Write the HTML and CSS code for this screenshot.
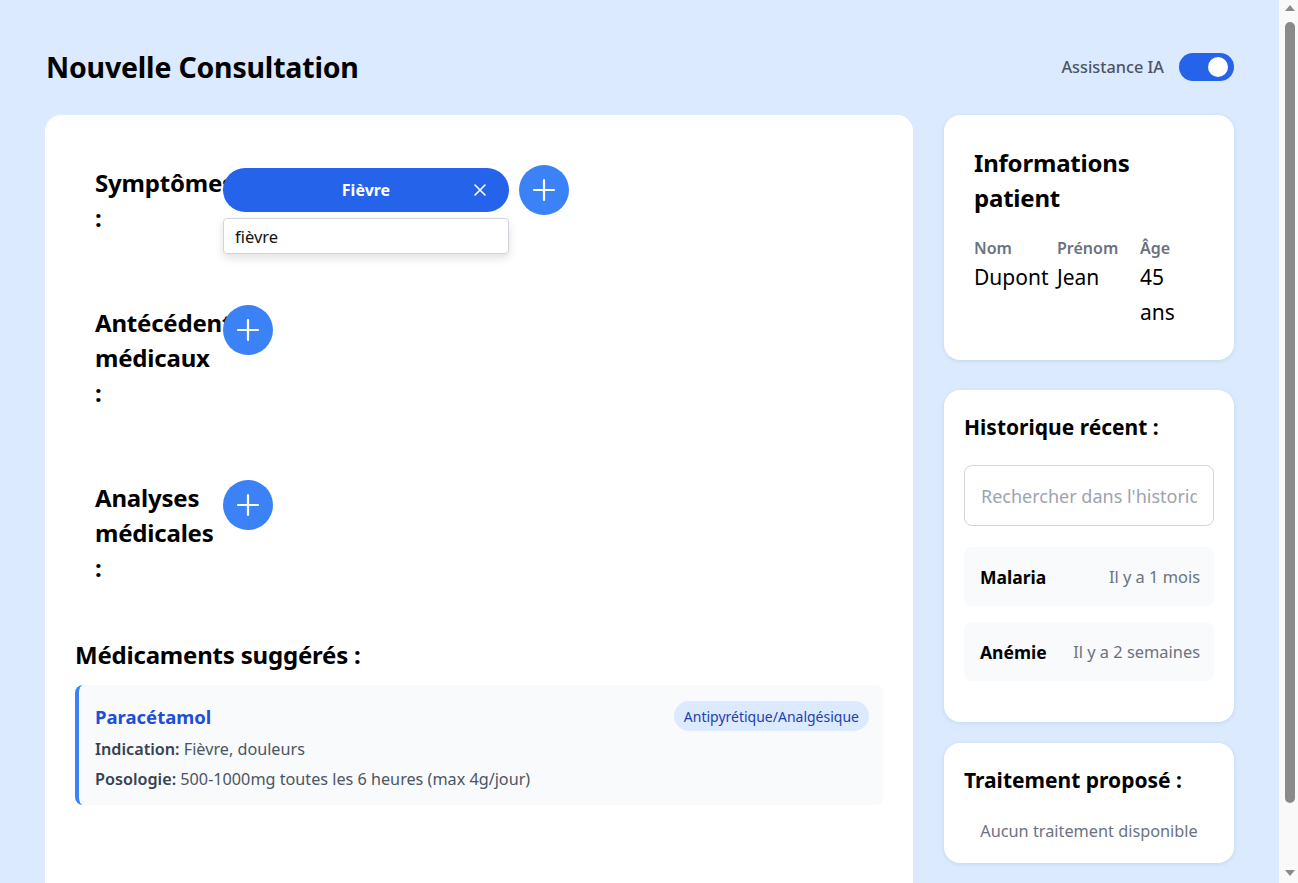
FILE: index.html
```html
<!DOCTYPE html>
<html lang="fr">
<head>
<meta charset="utf-8">
<title>Nouvelle Consultation</title>
<link rel="stylesheet" href="styles.css">
</head>
<body>
<div class="page">
  <header class="header">
    <h1 class="page-title">Nouvelle Consultation</h1>
    <div class="ai-toggle">
      <span class="ai-label">Assistance IA</span>
      <span class="switch"><span class="knob"></span></span>
    </div>
  </header>

  <div class="layout">
    <main class="main-card">
      <div class="sections">
        <div class="section">
          <h2 class="section-label">Symptômes :</h2>
          <div class="controls">
            <div class="chip-wrap">
              <div class="chip">
                <span></span>
                <span class="chip-text">Fièvre</span>
                <svg class="chip-x" width="14" height="14" viewBox="0 0 14 14"><path d="M2 2L12 12M12 2L2 12" stroke="#fff" stroke-width="1.6" stroke-linecap="round"/></svg>
              </div>
              <div class="dropdown">fièvre</div>
            </div>
            <button class="add-btn" type="button"><svg width="24" height="24" viewBox="0 0 24 24"><path d="M12 2V22M2 12H22" stroke="#fff" stroke-width="2.2" stroke-linecap="round"/></svg></button>
          </div>
        </div>

        <div class="section">
          <h2 class="section-label">Antécédents médicaux :</h2>
          <div class="controls">
            <button class="add-btn" type="button"><svg width="24" height="24" viewBox="0 0 24 24"><path d="M12 2V22M2 12H22" stroke="#fff" stroke-width="2.2" stroke-linecap="round"/></svg></button>
          </div>
        </div>

        <div class="section">
          <h2 class="section-label">Analyses médicales :</h2>
          <div class="controls">
            <button class="add-btn" type="button"><svg width="24" height="24" viewBox="0 0 24 24"><path d="M12 2V22M2 12H22" stroke="#fff" stroke-width="2.2" stroke-linecap="round"/></svg></button>
          </div>
        </div>
      </div>

      <h2 class="med-title">Médicaments suggérés :</h2>
      <div class="med-card">
        <div class="med-top">
          <span class="med-name">Paracétamol</span>
          <span class="med-badge">Antipyrétique/Analgésique</span>
        </div>
        <p class="med-line"><strong>Indication:</strong> Fièvre, douleurs</p>
        <p class="med-line"><strong>Posologie:</strong> 500-1000mg toutes les 6 heures (max 4g/jour)</p>
      </div>
    </main>

    <aside class="side">
      <section class="card info-card">
        <h2 class="info-title">Informations patient</h2>
        <div class="info-grid">
          <span class="info-key">Nom</span>
          <span class="info-key">Prénom</span>
          <span class="info-key">Âge</span>
          <span class="info-val">Dupont</span>
          <span class="info-val">Jean</span>
          <span class="info-val">45 ans</span>
        </div>
      </section>

      <section class="card hist-card">
        <h2 class="side-title">Historique récent :</h2>
        <input class="hist-search" type="text" placeholder="Rechercher dans l'historique">
        <ul class="hist-list">
          <li class="hist-item"><span class="hist-name">Malaria</span><span class="hist-when">Il y a 1 mois</span></li>
          <li class="hist-item"><span class="hist-name">Anémie</span><span class="hist-when">Il y a 2 semaines</span></li>
        </ul>
      </section>

      <section class="card treat-card">
        <h2 class="side-title">Traitement proposé :</h2>
        <p class="treat-empty">Aucun traitement disponible</p>
      </section>
    </aside>
  </div>
</div>

<div class="scrollbar" aria-hidden="true">
  <span class="sb-arrow sb-up"></span>
  <span class="sb-thumb"></span>
  <span class="sb-arrow sb-down"></span>
</div>
</body>
</html>
```

FILE: styles.css
```css
* { box-sizing: border-box; }

html, body {
  margin: 0;
  padding: 0;
}

body {
  background: #dbeafe;
  font-family: "Noto Sans", "Open Sans", sans-serif;
  color: #000;
}

/* simulated classic scrollbar */
.scrollbar {
  position: fixed;
  top: 0;
  right: 0;
  bottom: 0;
  width: 19px;
  background: #f9f9f9;
  display: flex;
  flex-direction: column;
  align-items: center;
  padding: 5px 0 7px 2px;
}

.sb-arrow {
  width: 0;
  height: 0;
  border-left: 5px solid transparent;
  border-right: 5px solid transparent;
}

.sb-up {
  border-bottom: 6px solid #8a8a8a;
}

.sb-down {
  border-top: 6px solid #8a8a8a;
}

.sb-thumb {
  width: 10px;
  flex: 1;
  margin: 11px 0 67px;
  border-radius: 5px;
  background: #8a8a8a;
}

.page {
  padding: 40px 64px 46px 45px;
}

.header {
  height: 54px;
  margin-bottom: 21px;
  display: flex;
  align-items: center;
  justify-content: space-between;
}

.page-title {
  margin: 0 0 0 1px;
  font-size: 28.5px;
  font-weight: 700;
  letter-spacing: -0.2px;
}

.ai-toggle {
  display: flex;
  align-items: center;
  gap: 15px;
}

.ai-label {
  font-size: 16.3px;
  font-weight: 500;
  color: #4b5563;
}

.switch {
  width: 55px;
  height: 28px;
  border-radius: 14px;
  background: #2563eb;
  display: flex;
  align-items: center;
  justify-content: flex-end;
  padding: 0 6px;
}

.knob {
  width: 20px;
  height: 20px;
  border-radius: 50%;
  background: #fff;
}

.layout {
  display: flex;
  align-items: flex-start;
  gap: 31px;
}

.main-card {
  flex: 1;
  background: #fff;
  border-radius: 16px;
  padding: 30px;
  min-height: 790px;
}

.sections {
  padding: 20px;
}

.section {
  display: flex;
  align-items: flex-start;
  margin-bottom: 70px;
}

.section:last-child {
  margin-bottom: 0;
}

.section-label {
  width: 118px;
  margin: 0 10px 0 0;
  flex-shrink: 0;
  font-size: 24px;
  font-weight: 700;
  line-height: 35px;
  letter-spacing: -0.2px;
}

.controls {
  display: flex;
  align-items: center;
  gap: 10px;
}

.chip-wrap {
  position: relative;
  width: 286px;
}

.chip {
  height: 44px;
  border-radius: 22px;
  background: #2563eb;
  color: #fff;
  display: grid;
  grid-template-columns: 1fr auto 1fr;
  align-items: center;
  padding: 0 22px;
}

.chip-text {
  font-size: 16px;
  font-weight: 700;
}

.chip-x {
  justify-self: end;
}

.dropdown {
  position: absolute;
  left: 0;
  right: 0;
  top: calc(100% + 6px);
  height: 36px;
  background: #fff;
  border: 1px solid #d1d5db;
  border-radius: 4px;
  box-shadow: 0 4px 10px rgba(0, 0, 0, 0.12);
  padding: 1px 11px 0;
  display: flex;
  align-items: center;
  font-size: 16.5px;
  color: #111;
}

.add-btn {
  width: 50px;
  height: 50px;
  border-radius: 50%;
  border: none;
  background: #3b82f6;
  display: flex;
  align-items: center;
  justify-content: center;
  padding: 0;
  flex-shrink: 0;
}

.med-title {
  margin: 32px 0 13px;
  font-size: 24px;
  font-weight: 700;
  line-height: 35px;
  letter-spacing: -0.2px;
}

.med-card {
  background: #f8fafc;
  border-left: 4px solid #3b82f6;
  border-radius: 8px;
  padding: 16px 14px 14px 16px;
}

.med-top {
  display: flex;
  align-items: center;
  justify-content: space-between;
  height: 30px;
}

.med-name {
  font-size: 18.5px;
  font-weight: 700;
  color: #1d4ed8;
}

.med-badge {
  background: #dbeafe;
  color: #1e40af;
  font-size: 14px;
  border-radius: 15px;
  padding: 0 10px;
  height: 30px;
  display: flex;
  align-items: center;
}

.med-line {
  margin: 6px 0 0;
  font-size: 16.2px;
  line-height: 24px;
  color: #4b5563;
}

.med-line strong {
  font-weight: 600;
  color: #374151;
}

.side {
  width: 290px;
  flex-shrink: 0;
  display: flex;
  flex-direction: column;
}

.card {
  background: #fff;
  border-radius: 16px;
  box-shadow: 0 1px 4px rgba(30, 64, 120, 0.12);
}

.info-card {
  padding: 30px;
  margin-bottom: 30px;
}

.info-title {
  margin: 0 0 21px;
  font-size: 24px;
  font-weight: 700;
  line-height: 35px;
  letter-spacing: -0.2px;
}

.info-grid {
  display: grid;
  grid-template-columns: repeat(3, 50px);
  column-gap: 33px;
}

.info-key {
  font-size: 16px;
  font-weight: 600;
  color: #6b7280;
  line-height: 24px;
  white-space: nowrap;
}

.info-val {
  font-size: 21px;
  line-height: 35px;
  margin-top: 0;
}

.hist-card {
  padding: 20px;
  margin-bottom: 21px;
}

.side-title {
  margin: 0;
  font-size: 21px;
  font-weight: 700;
  line-height: 35px;
}

.hist-search {
  display: block;
  width: 250px;
  height: 61px;
  margin: 20px 0 21px;
  border: 1px solid #d1d5db;
  border-radius: 8px;
  padding: 0 16px;
  font-family: inherit;
  font-size: 18px;
  color: #111;
  outline: none;
}

.hist-search::placeholder {
  color: #9ca3af;
}

.hist-list {
  list-style: none;
  margin: 0 0 21px;
  padding: 0;
  width: 250px;
  display: flex;
  flex-direction: column;
  gap: 16px;
}

.hist-item {
  height: 59px;
  background: #f8fafc;
  border-radius: 8px;
  padding: 0 14px 0 16px;
  display: flex;
  align-items: center;
  justify-content: space-between;
}

.hist-name {
  font-size: 17.5px;
  font-weight: 700;
}

.hist-when {
  font-size: 16.4px;
  color: #6b7280;
}

.treat-card {
  padding: 20px;
}

.treat-empty {
  margin: 21px 0 0;
  text-align: center;
  font-size: 16.3px;
  line-height: 24px;
  color: #6b7280;
}
```
